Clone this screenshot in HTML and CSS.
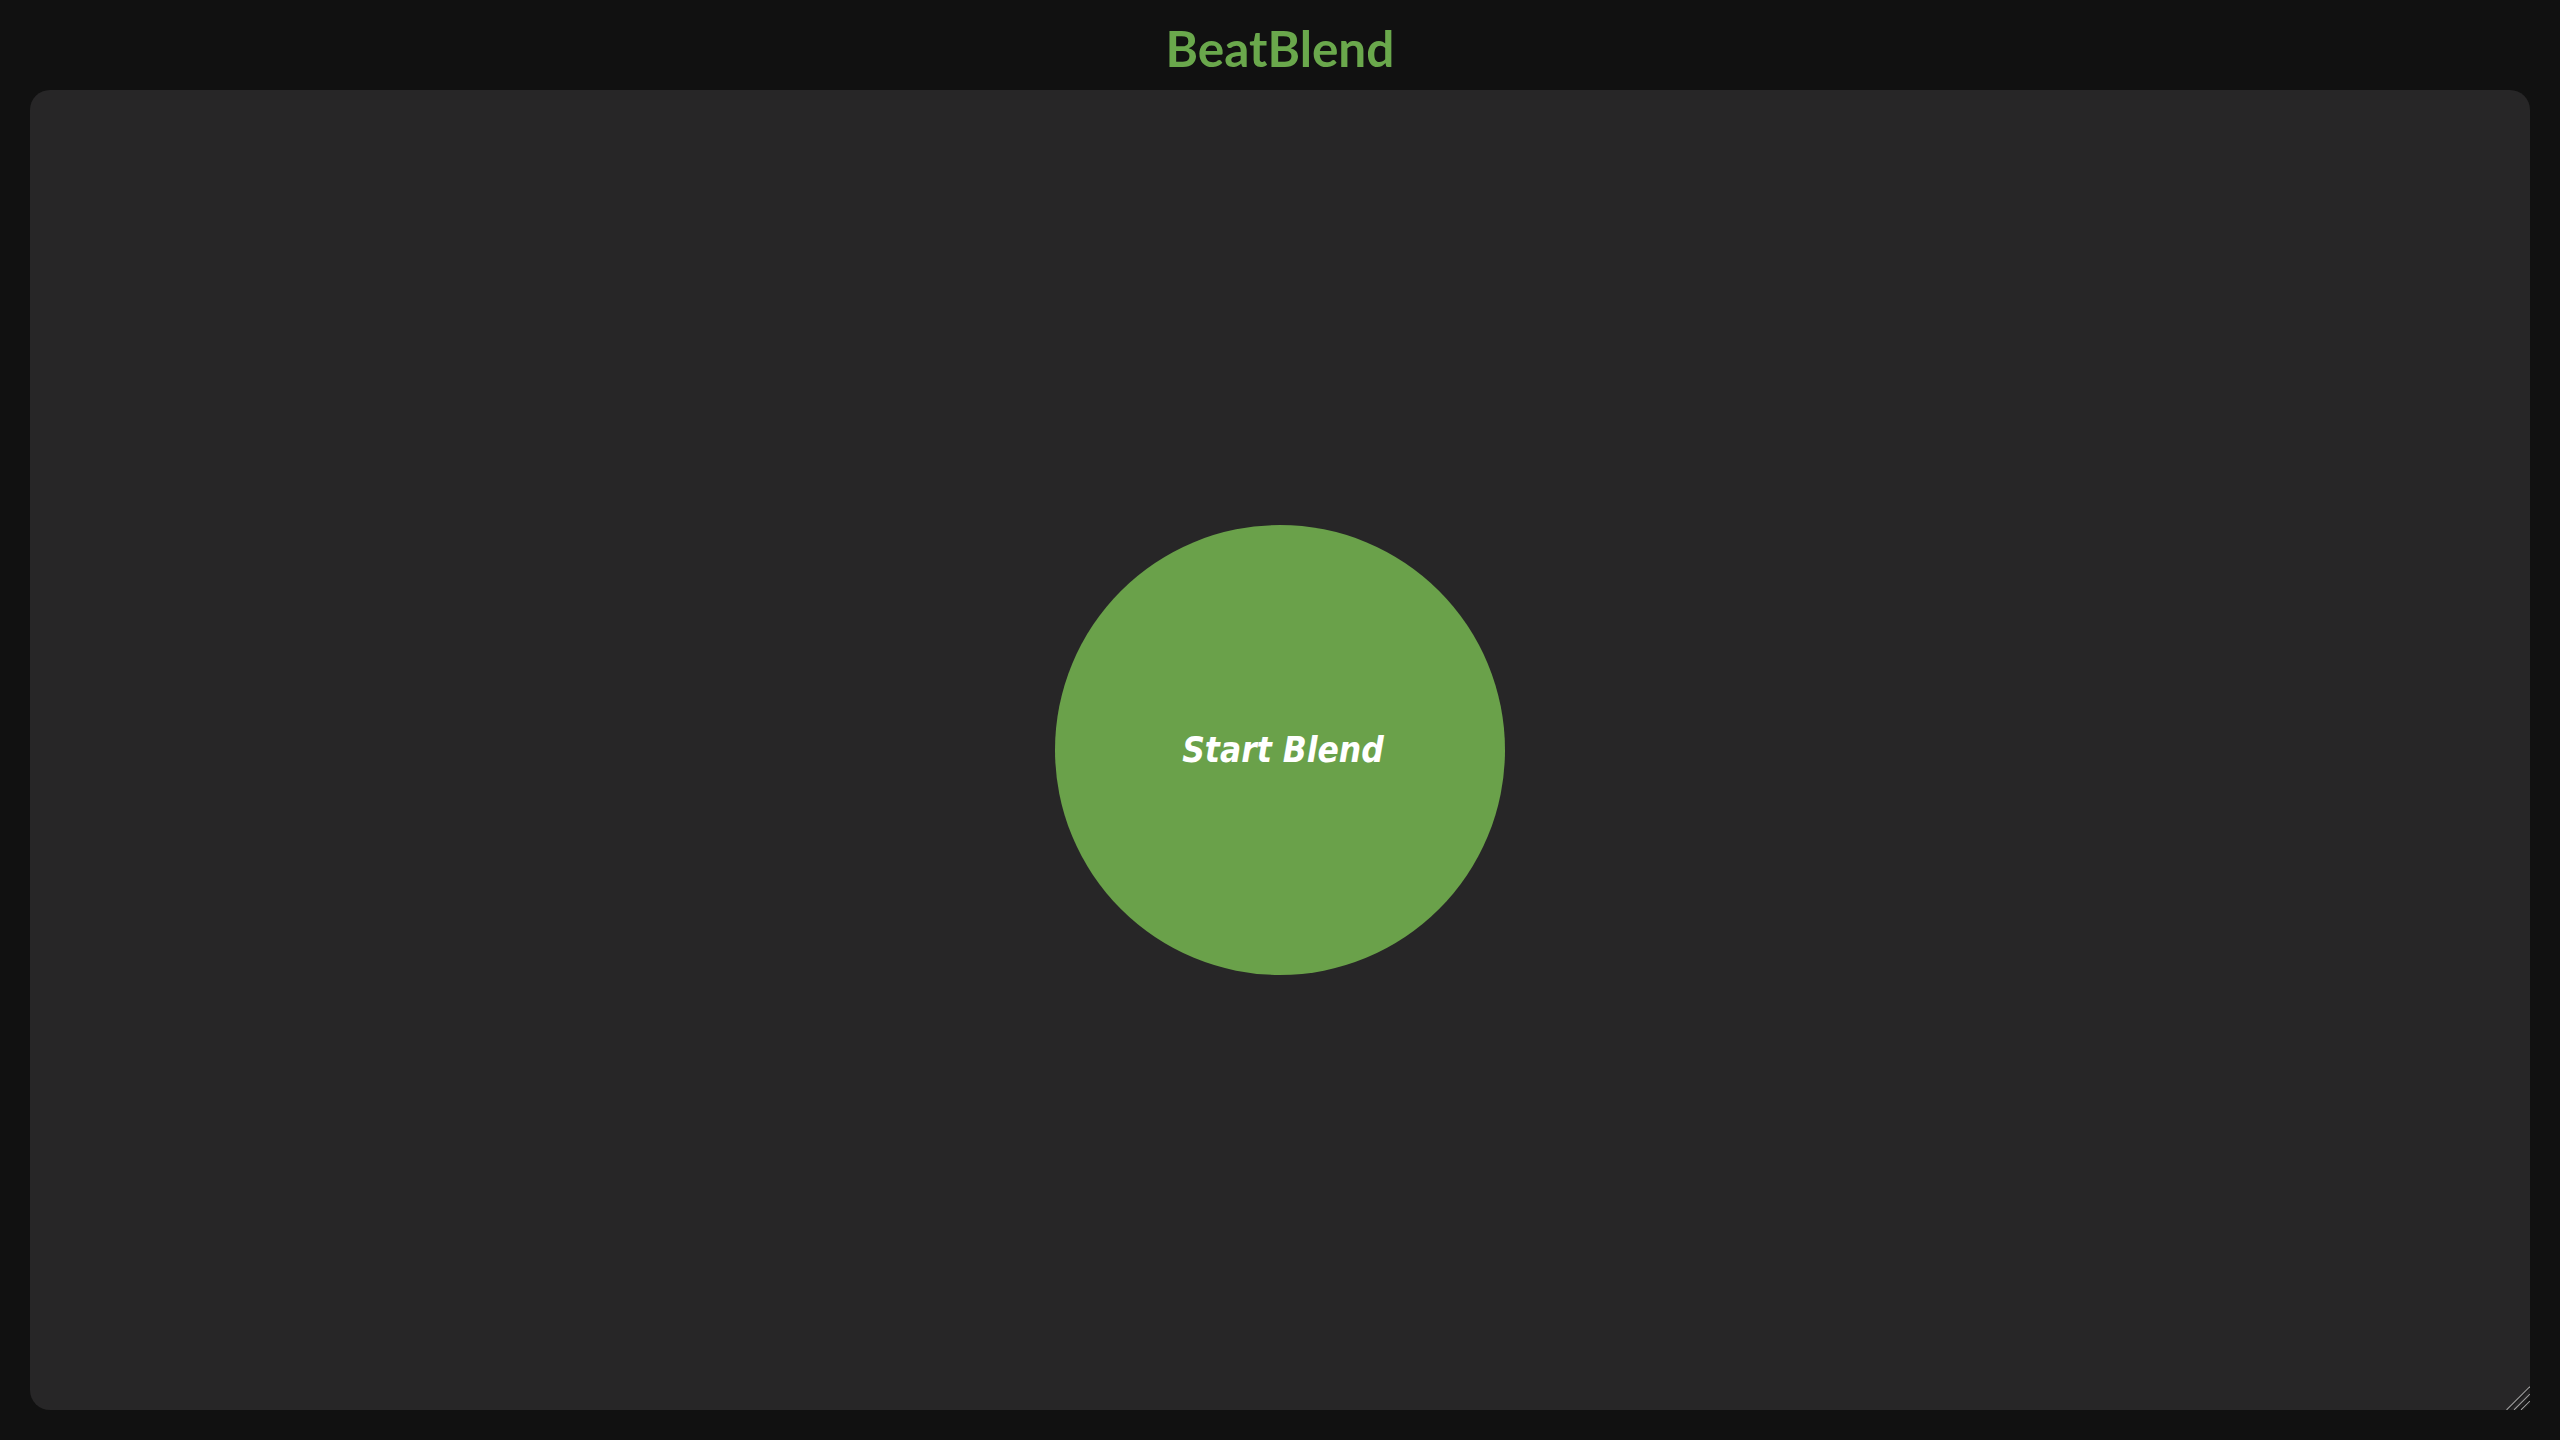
FILE: index.html
```html
<!DOCTYPE html>
<html lang="en">
<head>
<meta charset="utf-8">
<title>BeatBlend</title>
<link rel="stylesheet" href="styles.css">
</head>
<body>
<h1 class="title">BeatBlend</h1>
<main class="panel">
  <button class="blend-btn" type="button">Start Blend</button>
  <svg class="grip" width="24" height="24" viewBox="0 0 24 24" aria-hidden="true">
    <g stroke-width="1.2" stroke-linecap="square">
      <line x1="1" y1="23.5" x2="23.5" y2="1" stroke="#9a9a9a"/>
      <line x1="2.5" y1="24" x2="24" y2="2.5" stroke="#1a1a1a"/>
      <line x1="8.5" y1="23.5" x2="23.5" y2="8.5" stroke="#9a9a9a"/>
      <line x1="10" y1="24" x2="24" y2="10" stroke="#1a1a1a"/>
      <line x1="15.5" y1="23.5" x2="23.5" y2="15.5" stroke="#9a9a9a"/>
      <line x1="17" y1="24" x2="24" y2="17" stroke="#1a1a1a"/>
    </g>
  </svg>
</main>
</body>
</html>
```

FILE: styles.css
```css
html, body {
  height: 100%;
}
body {
  margin: 0;
  box-sizing: border-box;
  height: 100vh;
  padding: 19px 30px 30px;
  background: #111111;
  display: flex;
  flex-direction: column;
  font-family: Lato, "Open Sans", sans-serif;
}
.title {
  margin: 0 0 13px;
  text-align: center;
  font-family: Lato, sans-serif;
  font-weight: 700;
  font-size: 49.5px;
  line-height: 58px;
  color: #6aa84c;
}
.panel {
  position: relative;
  flex: 1;
  min-height: 0;
  background: #272627;
  border-radius: 20px;
  display: flex;
  align-items: center;
  justify-content: center;
}
.blend-btn {
  width: 450px;
  height: 450px;
  border: none;
  border-radius: 50%;
  background: #6aa14a;
  color: #ffffff;
  font-family: "DejaVu Sans Condensed", "DejaVu Sans", sans-serif;
  font-weight: 700;
  font-style: italic;
  font-size: 35px;
  padding: 0 0 0 6px;
  cursor: pointer;
}
.grip {
  position: absolute;
  right: 0;
  bottom: 0;
  display: block;
}
```
